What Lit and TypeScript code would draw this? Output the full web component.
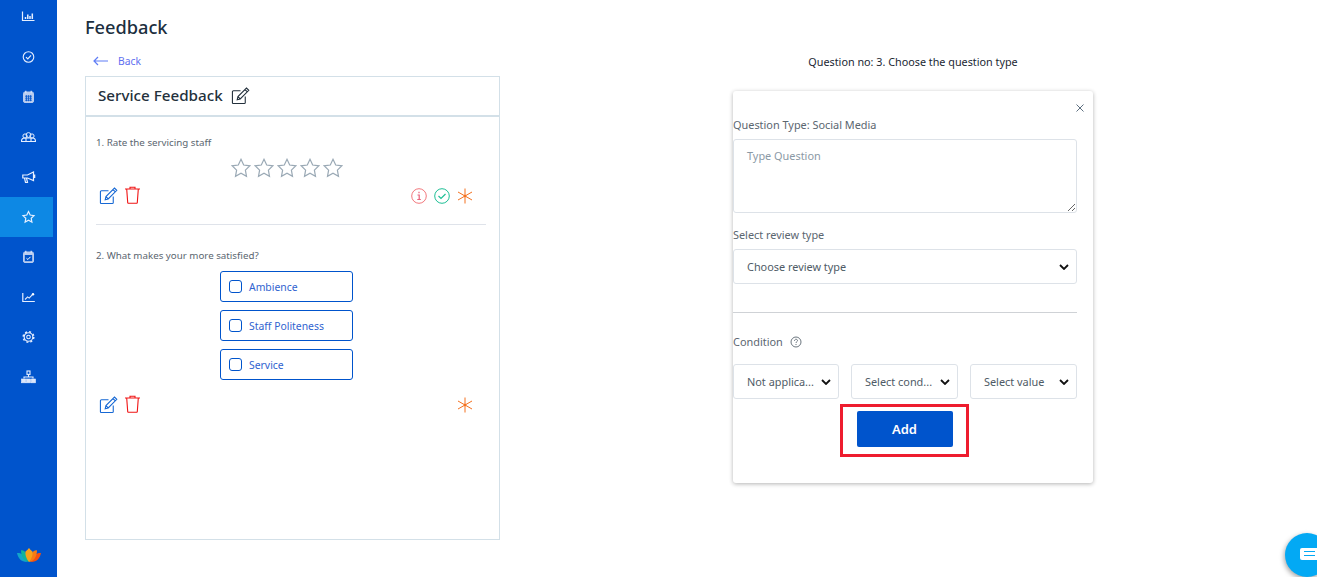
import { LitElement, css, html, svg } from "lit";
import { customElement } from "lit/decorators.js";

const navIcons = [
  svg`<path d="M1.500 2.500v9h12" stroke-width="1.200"/><path d="M4.500 10V8M6.800 10V5.500M9 10V7M11.300 10V4.500" stroke-width="1.500"/>`,
  svg`<circle cx="7.500" cy="7" r="5.300" stroke-width="1.100"/><path d="M5 7.200l1.800 1.800 3.200-3.600" stroke-width="1.200"/>`,
  svg`<rect x="2.500" y="2" width="10" height="10.500" rx="1.500" fill="#b9cdf0" stroke="#b9cdf0"/><path d="M4.800 .8v2.400M10.200 .8v2.400" stroke="#dbe6fa" stroke-width="1.200"/><path d="M4 6.200h7M4 8.200h7M4 10.200h7M5.500 5.200v6M7.500 5.200v6M9.500 5.200v6" stroke="#0054cc" stroke-width=".8"/>`,
  svg`<circle cx="4" cy="6" r="2.100" stroke-width="1"/><circle cx="11" cy="6" r="2.100" stroke-width="1"/><circle cx="7.500" cy="5" r="2.400" stroke-width="1"/><path d="M.5 11.500c0-2.400 1-3.500 3-3.500h8c2 0 3 1.100 3 3.500zM5 8v3.500M10 8v3.500" stroke-width="1.100"/>`,
  svg`<path d="M1.800 5h4.700L12.500 2v8.500L6.500 8H1.800zM3.500 8l1 4.500h2L5.500 8M13.700 4.500v3.500" stroke-width="1.200"/>`,
  svg`<path d="M7.500 1.500l1.700 3.500 3.800.6-2.800 2.700.7 3.800-3.400-1.800-3.400 1.800.7-3.800L2 5.600l3.800-.6z" stroke-width="1.200"/>`,
  svg`<rect x="2.500" y="2" width="10" height="10.500" rx="1.500" fill="#b9cdf0" stroke="#b9cdf0"/><path d="M4.800 .8v2.400M10.200 .8v2.400" stroke="#dbe6fa" stroke-width="1.200"/><rect x="3.800" y="5" width="7.400" height="6.200" fill="#0054cc" stroke="none"/><path d="M5.500 8.300l1.400 1.200 2.600-2.700" stroke="#fff" stroke-width="1"/>`,
  svg`<path d="M1.800 3v8.500h12" stroke-width="1.200"/><path d="M4 9.500l2.600-2.600 1.600 1.200 3-3.300" stroke-width="1.100"/><circle cx="12" cy="4.200" r="1.200" fill="#fff" stroke="none"/>`,
  svg`<circle cx="7.500" cy="7" r="4.300" stroke-width="1.100"/><circle cx="7.500" cy="7" r="5.300" stroke-width="1.500" stroke-dasharray="2 2.160"/><circle cx="7.500" cy="7" r="1.800" stroke-width="1.100"/>`,
  svg`<rect x="6" y="1" width="3" height="3.400" stroke-width="1.100"/><path d="M7.500 4.400v3M3 8.500V7h9v1.500" stroke-width="1.100"/><rect x=".5" y="9" width="4.200" height="3.800" fill="#dbe6fa" stroke-width=".6"/><rect x="5.400" y="9" width="4.200" height="3.800" fill="#dbe6fa" stroke-width=".6"/><rect x="10.300" y="9" width="4.200" height="3.800" fill="#dbe6fa" stroke-width=".6"/>`,
];

const pencil = (color: string, size: number) => html`
  <svg width=${size} height=${size} viewBox="0 0 20 20" fill="none" stroke=${color} stroke-width="1.150">
    <path d="M15 11v6.500a1 1 0 0 1-1 1H2.500a1 1 0 0 1-1-1V6a1 1 0 0 1 1-1H10"/>
    <path d="M6.500 14.500l.8-3.300L16.300 2.200l2.400 2.400-9 9zM14.800 3.700l2.400 2.400M7.300 11.200l2.400 2.400"/>
  </svg>
`;

const trash = html`
  <svg width="17" height="18" viewBox="0 0 17 18" fill="none" stroke="#f01414" stroke-width="1.100">
    <path d="M1 3h15M6 3V1.200h5V3M2.700 3l1 13.500a.8.8 0 0 0 .8.800h8a.8.8 0 0 0 .8-.800L14.300 3"/>
  </svg>
`;

const asterisk = html`
  <svg width="16" height="16" viewBox="0 0 16 16" stroke="#f4711f" stroke-width="1">
    <path d="M8 .5v15M1 4l14 8M15 4L1 12"/><circle cx="8" cy="8" r="1.300" fill="#f4711f" stroke="none"/>
  </svg>
`;

const chevron = html`
  <svg class="chev" width="10" height="6" viewBox="0 0 10 6" fill="none" stroke="#111" stroke-width="1.800">
    <path d="M1 1l4 4 4-4"/>
  </svg>
`;

const star = html`
  <svg width="20" height="20" viewBox="0 0 20 20" fill="none" stroke="#9aa9b5" stroke-width="1.200">
    <path d="M10 1.300l2.700 5.700 6.200.8-4.500 4.300 1.100 6.200L10 15.300l-5.500 3 1.100-6.200L1.100 7.800l6.200-.8z"/>
  </svg>
`;

@customElement("app-root")
export class AppRoot extends LitElement {
  static styles = css`
    :host {
      display: flex;
      position: relative;
      height: 577px;
      overflow: hidden;
      background: #fff;
      font-family: "Noto Sans", "Open Sans", sans-serif;
      color: #5b6670;
    }

    .sidebar {
      flex: none;
      display: flex;
      flex-direction: column;
      width: 57px;
      background: #0054cc;
      box-sizing: border-box;
    }

    .nav-item {
      display: flex;
      align-items: center;
      justify-content: center;
      width: 53px;
      height: 40px;
      margin-left: 2px;
      box-sizing: border-box;
    }

    .nav-item:first-child {
      height: 32px;
      margin-bottom: 5px;
    }

    .nav-item.active {
      margin-left: 0;
      padding-left: 4px;
      background: #0d88e4;
    }

    .sidebar-logo {
      margin: auto 0 18px 0;
      padding-left: 17px;
      height: 14px;
    }

    .left {
      flex: none;
      width: 415px;
      margin-left: 28px;
      padding-top: 14px;
    }

    h1 {
      margin: 0;
      font-size: 18.200px;
      line-height: 26px;
      font-weight: 500;
      color: #1c2f40;
    }

    .back {
      display: flex;
      align-items: center;
      gap: 10px;
      height: 20px;
      margin-top: 11px;
      padding-left: 8px;
      font-size: 10.300px;
      color: #5f6ff0;
    }

    .feedback-card {
      height: 464px;
      margin-top: 5px;
      border: 1px solid #d3e0e8;
      box-sizing: border-box;
    }

    .feedback-head {
      display: flex;
      align-items: center;
      gap: 8px;
      height: 36px;
      margin-bottom: 4px;
      padding-left: 12px;
      border-bottom: 0;
      box-sizing: border-box;
      font-size: 15.200px;
      font-weight: 500;
      color: #23303c;
    }

    .question {
      margin: 0 13px 0 10px;
      font-size: 9.750px;
      line-height: 14px;
      color: #5b6670;
    }

    .q-one {
      padding-top: 19px;
      height: 108px;
      box-sizing: border-box;
      border-bottom: 1px solid #dfe3ea;
    }

    .head-rule {
      height: 2px;
      margin-top: -2px;
      background: #d3e0e8;
    }

    .q-two {
      padding-top: 24px;
    }

    .stars {
      display: flex;
      justify-content: center;
      gap: 3px;
      margin: 8px 8px 0 0;
    }

    .actions {
      display: flex;
      align-items: center;
      gap: 6px;
      height: 20px;
      margin-top: 7px;
      padding-left: 3px;
    }

    .spacer {
      flex: 1;
    }

    .status {
      display: flex;
      align-items: center;
      gap: 7px;
      margin-right: 13px;
      padding-top: 2px;
    }

    .options {
      display: flex;
      flex-direction: column;
      gap: 8px;
      margin: 8px 0 0 124px;
    }

    .option {
      display: flex;
      align-items: center;
      gap: 7px;
      width: 133px;
      height: 31px;
      padding-left: 8px;
      border: 1px solid #0054cc;
      border-radius: 3px;
      box-sizing: border-box;
      font-size: 10.400px;
      color: #2f63d0;
    }

    .box {
      width: 13px;
      height: 13px;
      border: 1px solid #0054cc;
      border-radius: 3px;
      box-sizing: border-box;
    }

    .q-two .actions {
      margin-top: 14px;
    }

    .right {
      flex: none;
      width: 360px;
      margin-left: 233px;
      padding-top: 53px;
    }

    .q-title {
      height: 18px;
      font-size: 10.800px;
      line-height: 18px;
      text-align: center;
      color: #1b2733;
    }

    .form-card {
      height: 392px;
      margin-top: 20px;
      padding-right: 16px;
      border-radius: 3px;
      box-shadow: 0 1px 4px rgb(0 0 0 / 30%);
      box-sizing: border-box;
    }

    .close {
      display: flex;
      justify-content: flex-end;
      height: 27px;
      padding: 13px 0 0 0;
      margin-right: -7px;
      box-sizing: border-box;
    }

    label,
    .field-label {
      display: block;
      font-size: 10.900px;
      line-height: 14px;
      color: #5b6670;
    }

    textarea {
      display: block;
      width: 344px;
      height: 74px;
      margin-top: 7px;
      padding: 9px 13px;
      border: 1px solid #dde2e8;
      border-radius: 3px;
      box-sizing: border-box;
      font: 10.900px/14px "Noto Sans", sans-serif;
      outline: none;
    }

    textarea::placeholder {
      color: #8b99a5;
    }

    .review-label {
      margin-top: 15px;
    }

    .select {
      display: flex;
      align-items: center;
      justify-content: space-between;
      min-width: 0;
      height: 35px;
      padding: 0 7px 0 13px;
      border: 1px solid #dde2e8;
      border-radius: 3px;
      box-sizing: border-box;
      font-size: 10.900px;
      color: #4f5b66;
      white-space: nowrap;
    }

    .review-select {
      margin-top: 7px;
    }

    hr {
      height: 1px;
      margin: 28px 0 0;
      border: none;
      background: #cfd2d6;
    }

    .condition {
      display: flex;
      align-items: center;
      gap: 7px;
      margin-top: 22px;
    }

    .cond-row {
      display: grid;
      grid-template-columns: 106px 107px 107px;
      gap: 12px;
      margin-top: 15px;
    }

    .add-wrap {
      display: flex;
      align-items: flex-start;
      justify-content: center;
      width: 129px;
      height: 53px;
      margin: 5px 0 0 107px;
      padding-top: 4px;
      border: 3px solid #ee1c2e;
      box-sizing: border-box;
    }

    button {
      width: 96px;
      height: 36px;
      border: none;
      border-radius: 2px;
      background: #0054cc;
      color: #fff;
      font: 600 13px "Noto Sans", sans-serif;
    }

    .chat {
      position: absolute;
      left: 1285px;
      top: 533px;
      width: 44px;
      height: 44px;
      border-radius: 50%;
      background: #03a9f4;
      box-shadow: -1px 2px 5px rgb(0 0 0 / 35%);
    }

    .chat-msg {
      position: absolute;
      left: 15px;
      top: 15px;
      width: 26px;
      height: 12px;
      border-radius: 2px;
      background: #fff;
    }

    .chat-msg::before {
      content: "";
      position: absolute;
      left: 4px;
      top: 3px;
      width: 11px;
      height: 1px;
      background: #03a9f4;
      box-shadow: 0 4px 0 #03a9f4;
    }
  `;

  render() {
    return html`
      <aside class="sidebar">
        ${navIcons.map(
          (icon, i) => html`
            <div class="nav-item ${i === 5 ? "active" : ""}">
              <svg width="15" height="14" viewBox="0 0 15 14" fill="none" stroke="#e6efff">${icon}</svg>
            </div>
          `
        )}
        <div class="sidebar-logo">
          <svg width="24" height="14" viewBox="0 0 24 14">
            <path d="M0 5c3-.5 8 1 10 9-6 0-9-4-10-9z" fill="#12a5c9"/>
            <path d="M4 2.500c3-1 7 3 8 11.500-4 0-8-5-8-11.500z" fill="#10b39a"/>
            <path d="M24 5c-3-.5-8 1-10 9 6 0 9-4 10-9z" fill="#f5500f"/>
            <path d="M20 2.500c-3-1-7 3-8 11.500 4 0 8-5 8-11.500z" fill="#f57c14"/>
            <path d="M8.500 3.500c1.500-1 3.500-3.500 3.500-3.500s2 2.500 3.500 3.500c.5 3-.5 7-3.500 10.500-3-3.500-4-7.500-3.500-10.500z" fill="#f6a21a"/>
          </svg>
        </div>
      </aside>

      <section class="left">
        <h1>Feedback</h1>
        <div class="back">
          <svg width="15" height="10" viewBox="0 0 15 10" fill="none" stroke="#5f7df5" stroke-width="1.200">
            <path d="M15 5H1M5 1L1 5l4 4"/>
          </svg>
          <span>Back</span>
        </div>
        <div class="feedback-card">
          <div class="feedback-head">
            <span>Service Feedback</span>
            ${pencil("#23303c", 19)}
          </div>
          <div class="head-rule"></div>
          <div class="question q-one">
            <div>1. Rate the servicing staff</div>
            <div class="stars">${star}${star}${star}${star}${star}</div>
            <div class="actions">
              ${pencil("#1668d4", 19)} ${trash}
              <span class="spacer"></span>
              <span class="status">
                <svg width="16" height="16" viewBox="0 0 16 16" fill="none" stroke="#f2787d">
                  <circle cx="8" cy="8" r="7.300"/>
                  <path d="M6.500 7h1.700v4.500M6.300 11.500h3.500M8 3.800v1.500" stroke="#e8617a" stroke-width="1.200"/>
                </svg>
                <svg width="16" height="16" viewBox="0 0 16 16" fill="none" stroke="#1dbf95">
                  <circle cx="8" cy="8" r="7.300"/>
                  <path d="M4.500 8l2.500 2.500 4.500-4.500" stroke-width="1.200"/>
                </svg>
                ${asterisk}
              </span>
            </div>
          </div>
          <div class="question q-two">
            <div>2. What makes your more satisfied?</div>
            <div class="options">
              ${["Ambience", "Staff Politeness", "Service"].map(
                (name) => html`<div class="option"><span class="box"></span><span>${name}</span></div>`
              )}
            </div>
            <div class="actions">
              ${pencil("#1668d4", 19)} ${trash}
              <span class="spacer"></span>
              <span class="status">${asterisk}</span>
            </div>
          </div>
        </div>
      </section>

      <section class="right">
        <div class="q-title">Question no: 3. Choose the question type</div>
        <div class="form-card">
          <div class="close">
            <svg width="8" height="8" viewBox="0 0 8 8" stroke="#5d6f80" stroke-width="1">
              <path d="M.5.500l7 7M7.500.500l-7 7"/>
            </svg>
          </div>
          <label>Question Type: Social Media</label>
          <textarea placeholder="Type Question"></textarea>
          <label class="review-label">Select review type</label>
          <div class="select review-select"><span>Choose review type</span>${chevron}</div>
          <hr />
          <div class="field-label condition">
            <span>Condition</span>
            <svg width="12" height="12" viewBox="0 0 12 12" fill="none" stroke="#5b6670" stroke-width=".9">
              <circle cx="6" cy="6" r="5"/>
              <path d="M4.500 4.800c0-2 3-2 3-.2 0 1.100-1.500 1.100-1.500 2.400M6 8v1"/>
            </svg>
          </div>
          <div class="cond-row">
            <div class="select"><span>Not applica...</span>${chevron}</div>
            <div class="select"><span>Select cond...</span>${chevron}</div>
            <div class="select"><span>Select value</span>${chevron}</div>
          </div>
          <div class="add-wrap"><button>Add</button></div>
        </div>
      </section>

      <div class="chat"><div class="chat-msg"></div></div>
    `;
  }
}
